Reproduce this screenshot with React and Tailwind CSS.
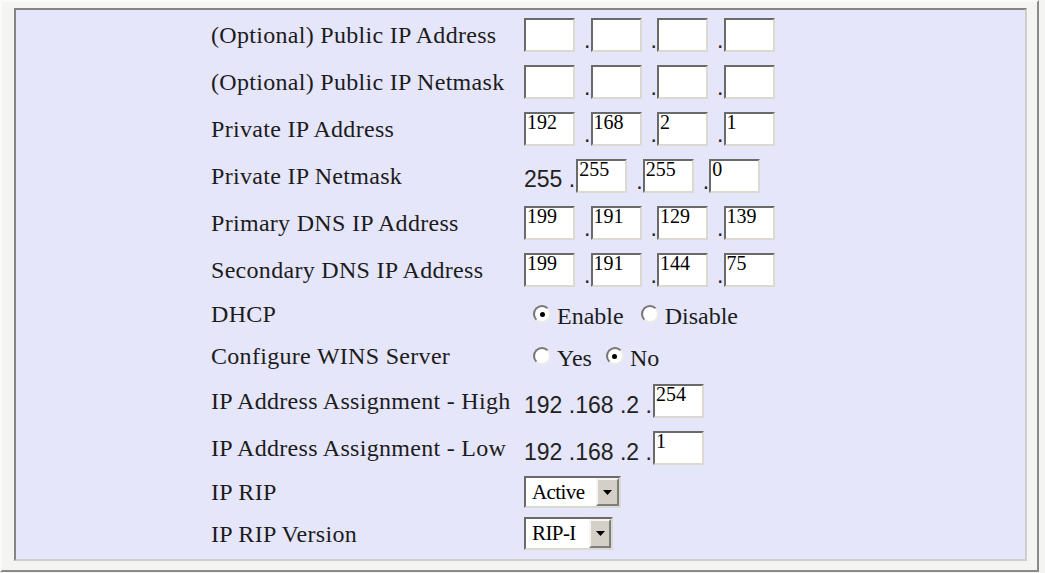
import React from "react";

function Box({ v }) {
  return (
    <div className="w-[51px] h-[34px] shrink-0 bg-white border-2 border-t-[#6a6a6a] border-l-[#6a6a6a] border-r-[#dcd9d1] border-b-[#dcd9d1] font-['Liberation_Serif',serif] text-[20px] leading-[16px] text-black pl-[1px] overflow-hidden whitespace-nowrap">
      {v}
    </div>
  );
}

function Dot() {
  return (
    <span className="w-[15.5px] shrink-0 self-end text-right font-['Liberation_Sans',Arial,sans-serif] text-[23px] leading-none text-[#222]">
      .
    </span>
  );
}

function Quad({ vals }) {
  return (
    <div className="flex items-end h-[34px]">
      <Box v={vals[0]} />
      <Dot />
      <Box v={vals[1]} />
      <Dot />
      <Box v={vals[2]} />
      <Dot />
      <Box v={vals[3]} />
    </div>
  );
}

function Netmask() {
  return (
    <div className="flex items-end h-[34px]">
      <span className="self-end mb-[2px] font-['Liberation_Sans',Arial,sans-serif] text-[23px] leading-none text-[#222] whitespace-pre">
        255 .
      </span>
      <div className="ml-[1px]">
        <Box v="255" />
      </div>
      <Dot />
      <Box v="255" />
      <Dot />
      <Box v="0" />
    </div>
  );
}

function Range({ v }) {
  return (
    <div className="flex items-end h-[34px]">
      <span className="self-end mb-[1px] font-['Liberation_Sans',Arial,sans-serif] text-[23px] leading-none text-[#222] whitespace-pre">
        192 .168 .2 .
      </span>
      <div className="ml-[1px]">
        <Box v={v} />
      </div>
    </div>
  );
}

function Radio({ checked }) {
  return (
    <span className="w-[18px] h-[18px] shrink-0 rounded-full bg-white border-2 border-t-[#767676] border-l-[#767676] border-r-[#ecebe6] border-b-[#ecebe6] flex items-center justify-center">
      {checked && <span className="w-[5px] h-[5px] rounded-full bg-black" />}
    </span>
  );
}

function RadioPair({ a, b, aOn, gap }) {
  return (
    <div className="flex items-center font-['Liberation_Serif',serif] text-[24px] leading-none text-[#1c1c1c]">
      <span className="ml-[9px]">
        <Radio checked={aOn} />
      </span>
      <span className="ml-[6px] pt-[3px]">{a}</span>
      <span className={gap}>
        <Radio checked={!aOn} />
      </span>
      <span className="ml-[6px] pt-[3px]">{b}</span>
    </div>
  );
}

function Arrow() {
  return (
    <svg width="9" height="5" viewBox="0 0 9 5">
      <polygon points="0,0 9,0 4.5,5" fill="#000" />
    </svg>
  );
}

function SelectActive() {
  return (
    <div className="flex w-[97px] h-[32px] bg-white border-2 border-t-[#6a6a6a] border-l-[#6a6a6a] border-r-[#dcd9d1] border-b-[#dcd9d1]">
      <div className="flex-1 flex items-center pl-[6px] font-['Liberation_Serif',serif] text-[21px] tracking-[-0.6px] leading-none text-black">
        Active
      </div>
      <div className="w-[23px] h-full flex items-center justify-center bg-[#d4d0c8] border-2 border-t-[#f5f4f0] border-l-[#f5f4f0] border-r-[#7d7d7d] border-b-[#7d7d7d]">
        <Arrow />
      </div>
    </div>
  );
}

function SelectRip() {
  return (
    <div className="flex w-[89px] h-[33px] bg-white border-2 border-t-[#6a6a6a] border-l-[#6a6a6a] border-r-[#dcd9d1] border-b-[#dcd9d1]">
      <div className="flex-1 flex items-center pl-[6px] font-['Liberation_Serif',serif] text-[21px] tracking-[-0.6px] leading-none text-black">
        RIP-I
      </div>
      <div className="w-[22px] h-full flex items-center justify-center bg-[#d4d0c8] border-2 border-t-[#f5f4f0] border-l-[#f5f4f0] border-r-[#7d7d7d] border-b-[#7d7d7d]">
        <Arrow />
      </div>
    </div>
  );
}

const rows = [
  { label: "(Optional) Public IP Address", h: "h-[47px]", value: <Quad vals={["", "", "", ""]} /> },
  { label: "(Optional) Public IP Netmask", h: "h-[47px]", value: <Quad vals={["", "", "", ""]} /> },
  { label: "Private IP Address", h: "h-[47px]", value: <Quad vals={["192", "168", "2", "1"]} /> },
  { label: "Private IP Netmask", h: "h-[48px]", value: <Netmask /> },
  { label: "Primary DNS IP Address", h: "h-[46px]", value: <Quad vals={["199", "191", "129", "139"]} /> },
  { label: "Secondary DNS IP Address", h: "h-[47px]", value: <Quad vals={["199", "191", "144", "75"]} /> },
  { label: "DHCP", h: "h-[42px]", value: <RadioPair a="Enable" b="Disable" aOn={true} gap="ml-[17px]" /> },
  { label: "Configure WINS Server", h: "h-[42px]", value: <RadioPair a="Yes" b="No" aOn={false} gap="ml-[14px]" /> },
  { label: "IP Address Assignment - High", h: "h-[48px]", value: <Range v="254" /> },
  { label: "IP Address Assignment - Low", h: "h-[46px]", value: <Range v="1" /> },
  { label: "IP RIP", h: "h-[42px]", value: <SelectActive /> },
  { label: "IP RIP Version", h: "h-[41px]", value: <SelectRip /> },
];

export default function App() {
  return (
    <div className="w-[1045px] h-[573px] bg-[#f4f4f3] overflow-hidden">
      <div className="w-[1039px] h-[572px] border-2 border-t-[#fafafa] border-l-[#fafafa] border-r-[#8a8a8a] border-b-[#8a8a8a] pl-[12px] pt-[6px] pr-[10px] pb-[9px] flex">
        <div className="flex-1 bg-[#e6e6fa] border-2 border-t-[#858585] border-l-[#858585] border-r-[#cfcfcf] border-b-[#cfcfcf] pt-[1px] pl-[195px]">
          {rows.map((r, i) => (
            <div key={i} className={`flex items-center ${r.h}`}>
              <div className="w-[313px] shrink-0 whitespace-nowrap font-['Liberation_Serif',serif] text-[24px] tracking-[0.3px] leading-none text-[#1c1c1c]">
                {r.label}
              </div>
              <div>{r.value}</div>
            </div>
          ))}
        </div>
      </div>
    </div>
  );
}
